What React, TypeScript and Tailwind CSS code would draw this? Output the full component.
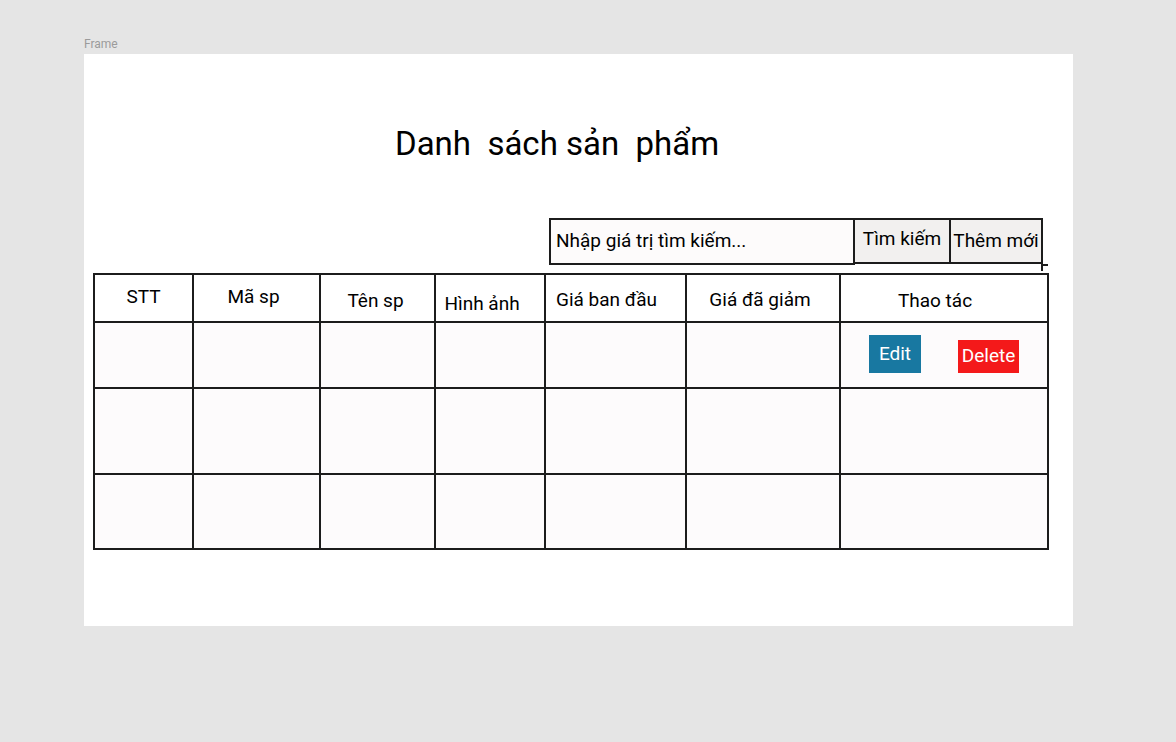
const cols = [99, 127, 115, 110, 141, 154, 206]

const headers = [
  { label: "STT", cls: "pt-[10px]" },
  { label: "Mã sp", cls: "pt-[10px] pr-[6px]" },
  { label: "Tên sp", cls: "pt-[14px] pr-[4px]" },
  { label: "Hình ảnh", cls: "pt-[17px] pr-[16px]" },
  { label: "Giá ban đầu", cls: "pt-[13px] pr-[18px]" },
  { label: "Giá đã giảm", cls: "pt-[13px] pr-[6px]" },
  { label: "Thao tác", cls: "pt-[14px] pr-[18px]" },
]

const rowHeights = [66, 86, 73]

export default function App() {
  return (
    <div className="w-[1176px] h-[742px] bg-[#e5e5e5] pt-[36px] pl-[84px] font-['Roboto',sans-serif] text-black">
      <div className="h-[18px] text-[12px] leading-[16px] text-[#9b9b9b]">Frame</div>
      <div className="w-[989px] h-[572px] bg-white flex flex-col">
        <h1 className="mt-[70px] pl-[311px] text-[33px] leading-[40px] whitespace-pre font-normal">
          Danh  sách sản  phẩm
        </h1>

        <div className="mt-[54px] ml-[465px] flex h-[47px] text-[19px]">
          <div className="w-[306px] h-[47px] border-2 border-[#1c1c1c] bg-[#fdfbfb] flex items-center pl-[5px]">
            Nhập giá trị tìm kiếm...
          </div>
          <div className="w-[96px] h-[46px] border-y-2 border-r-2 border-[#1c1c1c] bg-[#f2f0ef] flex items-center justify-center pb-[3px]">
            Tìm kiếm
          </div>
          <div className="relative w-[92px] h-[46px] border-y-2 border-r-2 border-[#1c1c1c] bg-[#f2f0ef] flex items-center justify-center pt-[1px]">
            Thêm mới
            <span className="absolute right-[-2px] top-[42px] w-[2px] h-[9px] bg-[#1c1c1c]" />
            <span className="absolute right-[-7px] top-[44px] w-[6px] h-[2px] bg-[#1c1c1c]" />
          </div>
        </div>

        <div className="mt-[8px] ml-[9px] w-[956px] border-2 border-[#1c1c1c] bg-[#fdfbfc] text-[19px]">
          <div className="flex h-[48px] border-b-2 border-[#1c1c1c] bg-white">
            {headers.map((h, i) => (
              <div
                key={h.label}
                style={{ width: cols[i] }}
                className={`flex justify-center leading-[24px] ${i < cols.length - 1 ? "border-r-2 border-[#1c1c1c]" : ""} ${h.cls}`}
              >
                {h.label}
              </div>
            ))}
          </div>
          {rowHeights.map((rh, r) => (
            <div
              key={r}
              style={{ height: rh }}
              className={`flex ${r < rowHeights.length - 1 ? "border-b-2 border-[#1c1c1c]" : ""}`}
            >
              {cols.map((w, i) => (
                <div
                  key={i}
                  style={{ width: w }}
                  className={i < cols.length - 1 ? "border-r-2 border-[#1c1c1c]" : ""}
                >
                  {r === 0 && i === cols.length - 1 && (
                    <div className="flex items-start pt-[12px] pl-[28px] gap-[37px] text-white">
                      <button className="w-[52px] h-[38px] bg-[#1878a1] flex items-center justify-center">
                        Edit
                      </button>
                      <button className="mt-[5px] w-[61px] h-[33px] bg-[#f4191a] flex items-center justify-center">
                        Delete
                      </button>
                    </div>
                  )}
                </div>
              ))}
            </div>
          ))}
        </div>
      </div>
    </div>
  )
}
